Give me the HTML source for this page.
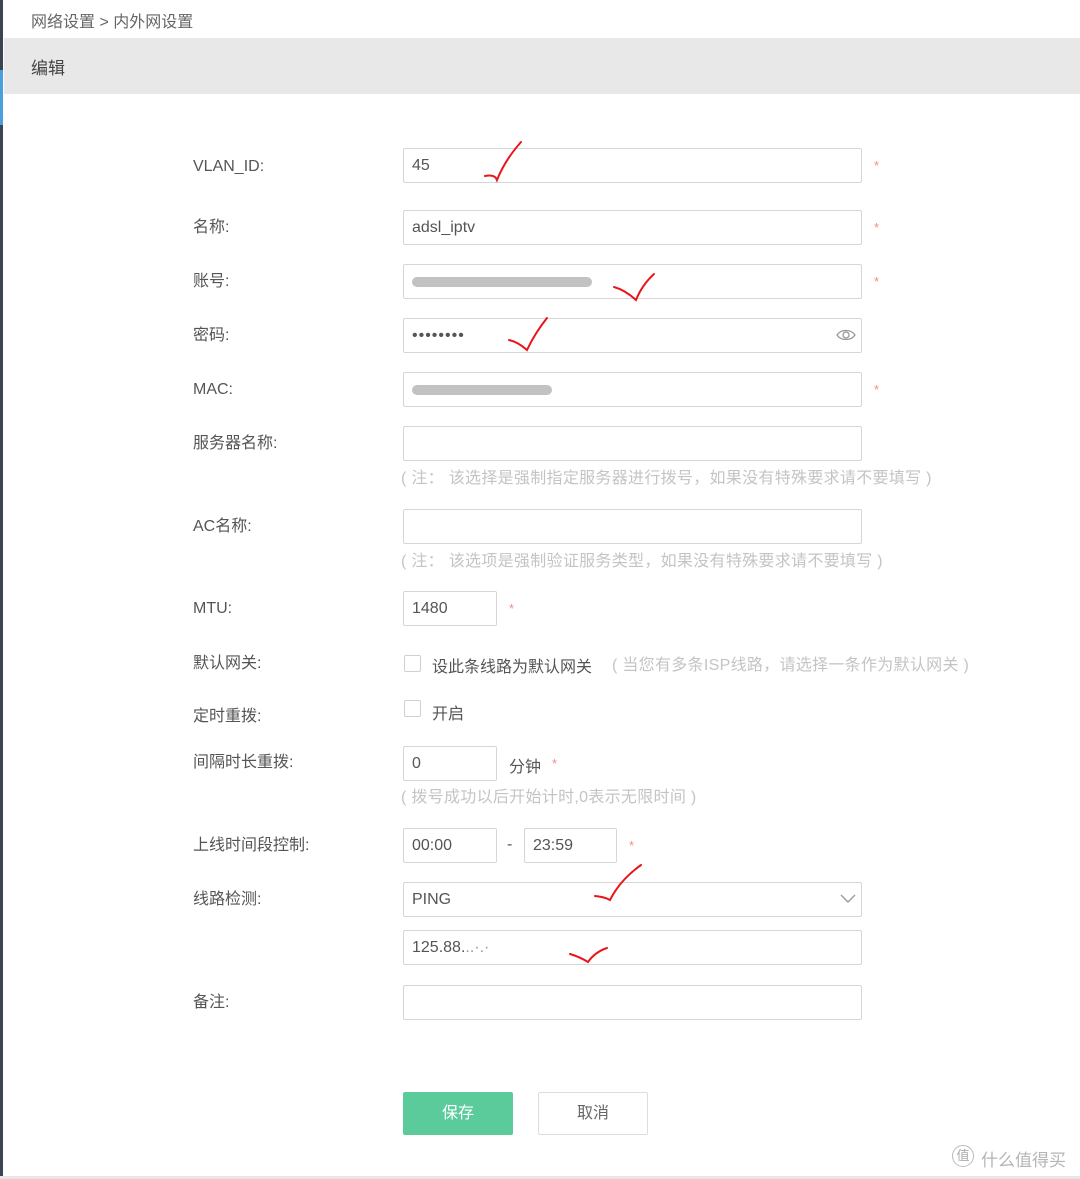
<!DOCTYPE html>
<html><head><meta charset="utf-8"><style>
*{margin:0;padding:0;box-sizing:border-box}
body{width:1080px;height:1179px;background:#fff;position:relative;overflow:hidden;font-family:"Liberation Sans","Noto Sans CJK SC",sans-serif;color:#555;font-size:16px}
.a{position:absolute;white-space:nowrap}
.lbl{position:absolute;left:193px;font-size:16px;color:#555;line-height:20px}
.in{position:absolute;left:403px;width:459px;height:35px;border:1px solid #d6d6d6;border-radius:2px;font-size:16px;color:#555;padding-left:8px;line-height:33px;background:#fff}
.star{position:absolute;color:#f58a8a;font-size:13px}
.note{position:absolute;left:401px;color:#c4c4c4;font-size:16px;line-height:20px;white-space:nowrap;letter-spacing:0.3px}
.cb{position:absolute;left:404px;width:17px;height:17px;border:1px solid #d0d0d0;border-radius:2px}
svg.ck{position:absolute;overflow:visible}
</style></head><body>
<div class="a" style="left:0;top:0;width:3px;height:1179px;background:#3b4452"></div>
<div class="a" style="left:0;top:70px;width:3px;height:55px;background:#4a9fdc"></div>
<div class="a" style="left:31px;top:8px;font-size:16px;color:#666">网络设置 &gt; 内外网设置</div>
<div class="a" style="left:4px;top:38px;width:1076px;height:56px;background:#e8e8e8"></div>
<div class="a" style="left:31px;top:54px;font-size:17px;color:#444">编辑</div>

<div class="lbl" style="top:157px">VLAN_ID:</div><div class="in" style="top:148px">45</div><div class="star" style="left:874px;top:158px">*</div>
<div class="lbl" style="top:218px">名称:</div><div class="in" style="top:210px">adsl_iptv</div><div class="star" style="left:874px;top:220px">*</div>
<div class="lbl" style="top:272px">账号:</div><div class="in" style="top:264px"><span style="display:inline-block;width:180px;height:10px;margin-top:12px;background:#c2c2c2;border-radius:5px;vertical-align:top"></span></div><div class="star" style="left:874px;top:274px">*</div>
<div class="lbl" style="top:326px">密码:</div><div class="in" style="top:318px;letter-spacing:1px">••••••••</div>
<svg class="ck" style="left:836px;top:328px" width="20" height="14" viewBox="0 0 20 14"><path d="M1 7C5 1 15 1 19 7C15 13 5 13 1 7Z" fill="none" stroke="#999" stroke-width="1.3"/><circle cx="10" cy="7" r="3" fill="none" stroke="#999" stroke-width="1.3"/></svg>
<div class="lbl" style="top:380px">MAC:</div><div class="in" style="top:372px"><span style="display:inline-block;width:140px;height:10px;margin-top:12px;background:#c2c2c2;border-radius:5px;vertical-align:top"></span></div><div class="star" style="left:874px;top:382px">*</div>
<div class="lbl" style="top:434px">服务器名称:</div><div class="in" style="top:426px"></div>
<div class="note" style="top:469px">( 注： 该选择是强制指定服务器进行拨号，如果没有特殊要求请不要填写 )</div>
<div class="lbl" style="top:517px">AC名称:</div><div class="in" style="top:509px"></div>
<div class="note" style="top:552px">( 注： 该选项是强制验证服务类型，如果没有特殊要求请不要填写 )</div>
<div class="lbl" style="top:599px">MTU:</div><div class="in" style="top:591px;width:94px">1480</div><div class="star" style="left:509px;top:601px">*</div>
<div class="lbl" style="top:654px">默认网关:</div><div class="cb" style="top:655px"></div><div class="a" style="left:432px;top:653px;color:#555">设此条线路为默认网关</div><div class="note" style="left:612px;top:656px">( 当您有多条ISP线路，请选择一条作为默认网关 )</div>
<div class="lbl" style="top:707px">定时重拨:</div><div class="cb" style="top:700px"></div><div class="a" style="left:432px;top:700px;color:#555">开启</div>
<div class="lbl" style="top:753px">间隔时长重拨:</div><div class="in" style="top:746px;width:94px">0</div><div class="a" style="left:509px;top:753px">分钟</div><div class="star" style="left:552px;top:756px">*</div>
<div class="note" style="top:788px">( 拨号成功以后开始计时,0表示无限时间 )</div>
<div class="lbl" style="top:836px">上线时间段控制:</div><div class="in" style="top:828px;width:94px">00:00</div><div class="a" style="left:507px;top:836px">-</div><div class="in" style="top:828px;left:524px;width:93px">23:59</div><div class="star" style="left:629px;top:838px">*</div>
<div class="lbl" style="top:890px">线路检测:</div><div class="in" style="top:882px">PING</div>
<svg class="ck" style="left:840px;top:894px" width="16" height="10"><path d="M1 1L8 8L15 1" fill="none" stroke="#999" stroke-width="1.4"/></svg>
<div class="in" style="top:930px">125.88.<span style="color:#999">..·.·</span></div>
<div class="lbl" style="top:993px">备注:</div><div class="in" style="top:985px"></div>
<div class="a" style="left:403px;top:1092px;width:110px;height:43px;background:#5ccb9c;border-radius:2px;color:#fff;text-align:center;line-height:43px">保存</div>
<div class="a" style="left:538px;top:1092px;width:110px;height:43px;border:1px solid #ddd;border-radius:2px;color:#666;text-align:center;line-height:41px">取消</div>
<div class="a" style="left:952px;top:1145px;width:22px;height:22px;border:1px solid #bbb;border-radius:50%;font-size:13px;color:#aaa;text-align:center;line-height:20px">值</div>
<div class="a" style="left:981px;top:1146px;font-size:17px;color:#b5b5b5">什么值得买</div>
<div class="a" style="left:0;top:1176px;width:1080px;height:3px;background:#e6e6e6"></div>

<svg class="ck" style="left:0;top:0" width="1080" height="1179"><g fill="none" stroke="#e8161b" stroke-width="2" stroke-linecap="round">
<path d="M485 176Q495 174 497 180Q505 160 521 142"/>
<path d="M614 287Q625 290 636 300Q642 285 654 274"/>
<path d="M509 340Q518 342 527 350Q535 333 547 318"/>
<path d="M595 896Q605 897 610 900Q620 880 641 865"/>
<path d="M570 954Q580 957 588 962Q595 952 607 948"/>
</g></svg>
</body></html>
